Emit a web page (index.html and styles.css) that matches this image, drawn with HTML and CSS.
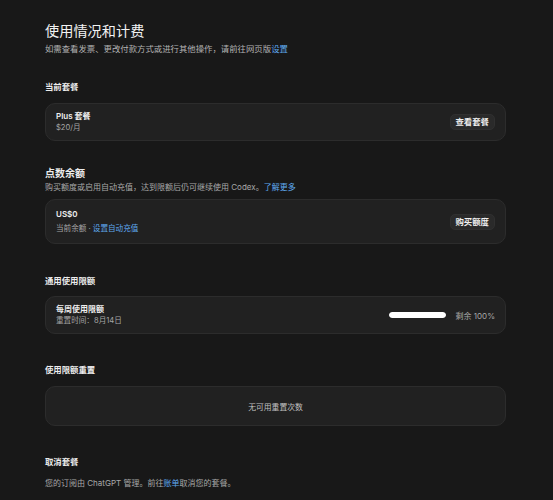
FILE: index.html
```html
<!DOCTYPE html>
<html lang="zh-CN">
<head>
  <meta charset="UTF-8" />
  <meta name="viewport" content="width=device-width, initial-scale=1.0"/>
  <title>使用情况和计费</title>
  <link rel="stylesheet" href="styles.css">
</head>
<body>
  <div class="page">

    <!-- 页面标题 -->
    <header class="page-head">
      <h1 class="page-title">使用情况和计费</h1>
      <p class="page-desc">如需查看发票、更改付款方式或进行其他操作，请前往网页版<a href="#" class="link">设置</a></p>
    </header>

    <!-- 当前套餐 -->
    <section class="section section-plan">
      <h2 class="section-title">当前套餐</h2>
      <div class="card card-row">
        <div class="card-text">
          <div class="card-main">Plus 套餐</div>
          <div class="card-sub">$20/月</div>
        </div>
        <button class="btn">查看套餐</button>
      </div>
    </section>

    <!-- 点数余额 -->
    <section class="section section-credit">
      <h2 class="section-title big">点数余额</h2>
      <p class="section-desc">购买额度或启用自动充值，达到限额后仍可继续使用 Codex。<a href="#" class="link">了解更多</a></p>
      <div class="card card-row tall">
        <div class="card-text">
          <div class="card-main">US$0</div>
          <div class="card-sub">当前余额 · <a href="#" class="link">设置自动充值</a></div>
        </div>
        <button class="btn">购买额度</button>
      </div>
    </section>

    <!-- 通用使用限额 -->
    <section class="section section-limit">
      <h2 class="section-title">通用使用限额</h2>
      <div class="card card-row">
        <div class="card-text">
          <div class="card-main">每周使用限额</div>
          <div class="card-sub">重置时间：8月14日</div>
        </div>
        <div class="usage">
          <div class="bar"><div class="bar-fill" style="width: 100%"></div></div>
          <span class="usage-text">剩余 100%</span>
        </div>
      </div>
    </section>

    <!-- 使用限额重置 -->
    <section class="section section-reset">
      <h2 class="section-title">使用限额重置</h2>
      <div class="card card-empty">无可用重置次数</div>
    </section>

    <!-- 取消套餐 -->
    <section class="section section-cancel">
      <h2 class="section-title">取消套餐</h2>
      <p class="section-desc">您的订阅由 ChatGPT 管理。前往<a href="#" class="link">账单</a>取消您的套餐。</p>
    </section>

  </div>
</body>
</html>
```

FILE: styles.css
```css
/* 整体背景与字体 */
body {
  margin: 0;
  background: #181818;
  color: #ececec;
  font-family: Inter, "Noto Sans CJK SC", sans-serif;
}

.page {
  width: 461px;
  padding: 22px 0 0 45px;
}

/* 标题 */
.page-title {
  margin: 0;
  font-size: 14.2px;
  line-height: 18px;
  font-weight: 400;
  color: #f2f2f2;
}

.page-desc {
  margin: 3px 0 0;
  font-size: 8.4px;
  line-height: 12px;
  color: #b4b4b4;
}

.link {
  color: #5fa8ef;
  text-decoration: none;
}

/* 各个区块 */
.section-plan   { margin-top: 26px; }
.section-credit { margin-top: 25px; }
.section-limit  { margin-top: 31px; }
.section-reset  { margin-top: 30px; }
.section-cancel { margin-top: 30px; }

.section-title {
  margin: 0 0 10px;
  font-size: 8.4px;
  line-height: 12px;
  font-weight: 600;
  color: #ececec;
}

.section-title.big {
  margin-bottom: 1px;
  font-size: 10px;
  line-height: 14px;
}

.section-credit .section-desc { margin-bottom: 6px; }
.section-limit .section-title { margin-bottom: 9px; }
.section-cancel .section-title { margin-bottom: 9px; }

.section-desc {
  margin: 0;
  font-size: 8px;
  line-height: 12px;
  color: #a8a8a8;
}

/* 卡片 */
.card {
  background: #212121;
  border: 1px solid #2c2c2c;
  border-radius: 10px;
  box-sizing: border-box;
}

.card-row {
  display: flex;
  align-items: center;
  justify-content: space-between;
  height: 38px;
  padding: 0 10px;
}

.card-row.tall {
  height: 45px;
}

.card-main {
  font-size: 8px;
  line-height: 11.5px;
  font-weight: 600;
  color: #eeeeee;
}

.card-sub {
  font-size: 7.6px;
  line-height: 11.5px;
  color: #a5a5a5;
}

.tall .card-main,
.tall .card-sub {
  line-height: 13.4px;
}

/* 按钮 */
.btn {
  height: 16px;
  padding: 0 5px;
  border: 1px solid #303030;
  border-radius: 5px;
  background: #2a2a2a;
  color: #f0f0f0;
  font-family: inherit;
  font-size: 8.4px;
  font-weight: 600;
  line-height: 14px;
}

/* 用量进度条 */
.usage {
  display: flex;
  align-items: center;
  gap: 10px;
}

.bar {
  width: 57px;
  height: 6px;
  border-radius: 3px;
  background: #3a3a3a;
  overflow: hidden;
}

.bar-fill {
  height: 100%;
  background: #ffffff;
  border-radius: 3px;
}

.usage-text {
  font-size: 8px;
  color: #a8a8a8;
}

/* 空状态 */
.card-empty {
  height: 40px;
  display: flex;
  align-items: center;
  justify-content: center;
  font-size: 7.8px;
  color: #c0c0c0;
}
```
